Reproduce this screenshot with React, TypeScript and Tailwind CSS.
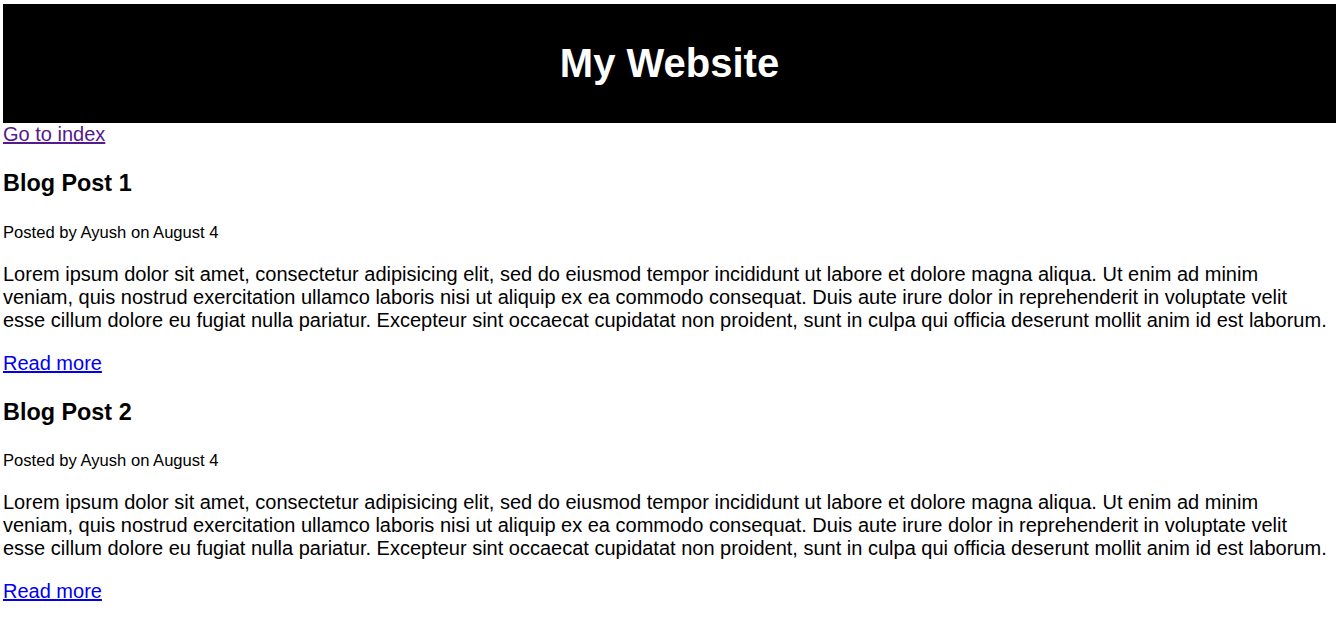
const lorem =
  "Lorem ipsum dolor sit amet, consectetur adipisicing elit, sed do eiusmod tempor incididunt ut labore et dolore magna aliqua. Ut enim ad minim veniam, quis nostrud exercitation ullamco laboris nisi ut aliquip ex ea commodo consequat. Duis aute irure dolor in reprehenderit in voluptate velit esse cillum dolore eu fugiat nulla pariatur. Excepteur sint occaecat cupidatat non proident, sunt in culpa qui officia deserunt mollit anim id est laborum.";

// ─── One blog entry ───────────────────────────────────────────────────────────

function Post({ title }: { title: string }) {
  return (
    <div>
      <h3 className="mt-[24px] mb-[23px] text-[23.4px] font-bold leading-[27px]">{title}</h3>
      <p className="mt-[25.5px] mb-[21px] text-[16.6px] leading-[19px]">Posted by Ayush on August 4</p>
      <p className="my-[20px] max-w-[1327px] leading-[23px]">{lorem}</p>
      <p className="my-[20px] leading-[23px]">
        <a href="#" className="text-[#0000EE] underline">
          Read more
        </a>
      </p>
    </div>
  );
}

// ─── Root ─────────────────────────────────────────────────────────────────────

export default function App() {
  return (
    <div className="min-h-screen bg-white px-[3px] pt-[4px] text-[20px] leading-[23px] text-black font-['Liberation_Sans',Arial,sans-serif]">
      <header className="bg-black pt-[10px] pb-[11px]">
        <h1 className="my-[26px] text-center text-[40px] font-bold leading-[46px] text-white">
          My Website
        </h1>
      </header>
      <div className="leading-[23px]">
        <a href="#" className="text-[#551A8B] underline">
          Go to index
        </a>
      </div>
      <Post title="Blog Post 1" />
      <Post title="Blog Post 2" />
    </div>
  );
}
